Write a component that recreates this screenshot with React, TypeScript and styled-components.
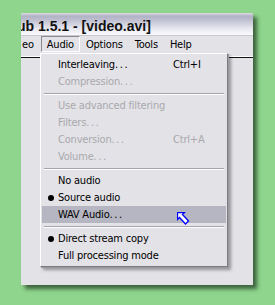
import React from "react";
import styled, { createGlobalStyle } from "styled-components";

const Global = createGlobalStyle`
  html, body { margin: 0; padding: 0; background: #8fd58d; }
  body { width: 275px; height: 305px; overflow: hidden; }
`;

const Page = styled.div`
  width: 275px;
  height: 305px;
  box-sizing: border-box;
  padding: 13px 0 0 21px;
  font-family: "DejaVu Sans Condensed", "DejaVu Sans", sans-serif;
  font-stretch: semi-condensed;
`;

const Window = styled.div`
  position: relative;
  width: 232px;
  height: 272px;
  background: #e3e2e7;
  display: flex;
  flex-direction: column;
  box-shadow: 4px 4px 4px rgba(20, 40, 20, 0.65);
`;

const TitleBar = styled.div`
  height: 23px;
  display: flex;
  align-items: center;
  overflow: hidden;
  padding-top: 3px;
  box-sizing: border-box;
  border-bottom: 1px solid #c8c8d0;
  background: linear-gradient(
    to bottom,
    #dcdce2 0%,
    #b2b2c6 14%,
    #bdbdcf 30%,
    #e6e6ee 70%,
    #fbfbfd 100%
  );
`;

const TitleText = styled.span`
  font-family: "Liberation Sans", Arial, sans-serif;
  font-weight: bold;
  font-size: 14px;
  color: #111;
  white-space: nowrap;
  margin-left: -4px;
`;

const MenuBar = styled.div`
  height: 16px;
  display: flex;
  align-items: stretch;
  font-size: 11px;
  letter-spacing: -0.2px;
  color: #000;
`;

const BarItem = styled.div<{ $pressed?: boolean; $first?: boolean }>`
  display: flex;
  align-items: center;
  padding: 0 5px;
  box-sizing: border-box;
  border: 1px solid transparent;
  ${(p) => (p.$first ? "padding: 0 6px 0 0;" : "")}
  ${(p) =>
    p.$pressed
      ? "border-color: #8a8a90 #ffffff #ffffff #8a8a90; padding: 0 5px;"
      : ""}
`;

const Body = styled.div`
  flex: 1;
  padding-top: 4px;
`;

const Divider = styled.div`
  border-top: 1px solid #ffffff;
  border-bottom: 1px solid #111;
`;

const Dropdown = styled.div`
  position: absolute;
  left: 19px;
  top: 40px;
  width: 188px;
  box-sizing: border-box;
  background: #e3e2e7;
  border: 1px solid;
  border-color: #ffffff #7c7c80 #7c7c80 #ffffff;
  padding: 2px 1px;
  box-shadow: 1px 1px 0 #9a9aa0, 3px 3px 3px rgba(0, 0, 0, 0.35);
  font-size: 11px;
  letter-spacing: -0.2px;
`;

const Item = styled.div<{ $disabled?: boolean; $active?: boolean }>`
  height: 17px;
  display: grid;
  grid-template-columns: 16px 115px 1fr;
  align-items: center;
  color: ${(p) => (p.$disabled ? "#a9a9ad" : "#000")};
  background: ${(p) => (p.$active ? "#b5b6c1" : "transparent")};
  white-space: nowrap;
`;

const Dots = styled.span`
  letter-spacing: 1.6px;
`;

const Check = styled.span`
  display: flex;
  justify-content: center;
  align-items: center;
`;

const Bullet = styled.span`
  width: 6px;
  height: 6px;
  border-radius: 50%;
  background: #000;
  margin-left: 1px;
`;

const Separator = styled.div`
  height: 7px;
  display: flex;
  align-items: center;
  padding: 0 2px;
  &::after {
    content: "";
    flex: 1;
    border-top: 1px solid #a4a4aa;
    border-bottom: 1px solid #ffffff;
  }
`;

const Cursor = styled.svg`
  position: absolute;
  left: 156px;
  top: 199px;
`;

type Entry =
  | { sep: true }
  | {
      sep?: false;
      label: string;
      shortcut?: string;
      disabled?: boolean;
      bullet?: boolean;
      active?: boolean;
    };

const entries: Entry[] = [
  { label: "Interleaving...", shortcut: "Ctrl+I" },
  { label: "Compression...", disabled: true },
  { sep: true },
  { label: "Use advanced filtering", disabled: true },
  { label: "Filters...", disabled: true },
  { label: "Conversion...", shortcut: "Ctrl+A", disabled: true },
  { label: "Volume...", disabled: true },
  { sep: true },
  { label: "No audio" },
  { label: "Source audio", bullet: true },
  { label: "WAV Audio...", active: true },
  { sep: true },
  { label: "Direct stream copy", bullet: true },
  { label: "Full processing mode" },
];

function Label({ text }: { text: string }) {
  if (text.endsWith("...")) {
    return (
      <span>
        {text.slice(0, -3)}
        <Dots>...</Dots>
      </span>
    );
  }
  return <span>{text}</span>;
}

export default function App() {
  return (
    <Page>
      <Global />
      <Window>
        <TitleBar>
          <TitleText>ub 1.5.1 - [video.avi]</TitleText>
        </TitleBar>
        <MenuBar>
          <BarItem $first>eo</BarItem>
          <BarItem $pressed>Audio</BarItem>
          <BarItem>Options</BarItem>
          <BarItem>Tools</BarItem>
          <BarItem>Help</BarItem>
        </MenuBar>
        <Body>
          <Divider />
        </Body>
        <Dropdown>
          {entries.map((e, i) =>
            e.sep ? (
              <Separator key={i} />
            ) : (
              <Item key={i} $disabled={e.disabled} $active={e.active}>
                <Check>{e.bullet ? <Bullet /> : null}</Check>
                <Label text={e.label} />
                <span>{e.shortcut ?? ""}</span>
              </Item>
            )
          )}
        </Dropdown>
        <Cursor width="13" height="15" viewBox="0 0 13 15">
          <polygon
            points="0.5,0.5 7.5,0.5 5.5,2.5 11.5,9 8.5,12 2.5,5.5 0.5,7.5"
            fill="#ffffff"
            stroke="#0000ff"
            strokeWidth="1.3"
            strokeLinejoin="miter"
          />
        </Cursor>
      </Window>
    </Page>
  );
}
